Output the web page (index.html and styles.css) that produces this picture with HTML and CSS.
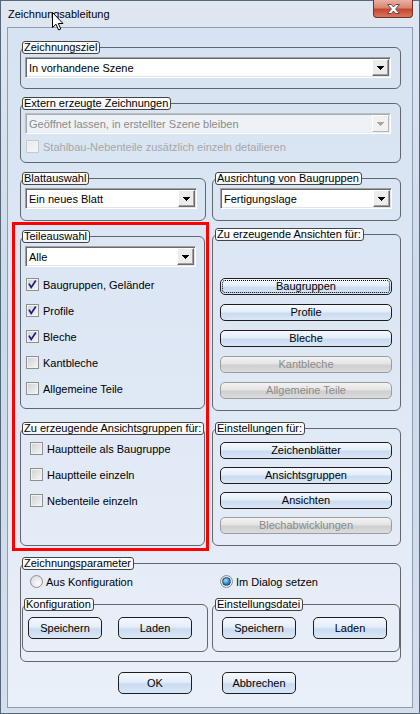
FILE: index.html
```html
<!DOCTYPE html>
<html lang="de">
<head>
  <meta charset="UTF-8">
  <title>Zeichnungsableitung</title>
  <link rel="stylesheet" href="styles.css">
</head>
<body>
  <div class="window">
    <div class="titlebar">
      <span class="title">Zeichnungsableitung</span>
      <div class="close">
        <svg width="13" height="10" viewBox="0 0 13 10"><path d="M0.5 0.5H4.3L6.5 3L8.7 0.5H12.5L8.6 5L12.5 9.5H8.7L6.5 7L4.3 9.5H0.5L4.4 5Z" fill="#fff" stroke="#6a4b47"/></svg>
      </div>
    </div>

    <div class="client">
      <fieldset class="group g-ziel">
        <legend>Zeichnungsziel</legend>
        <div class="combo"><span class="value">In vorhandene Szene</span><span class="drop"><svg width="7" height="4" viewBox="0 0 7 4"><path d="M0 0h7v1h-1v1h-1v1h-1v1h-1v-1h-1v-1h-1v-1h-1z"/></svg></span></div>
      </fieldset>

      <fieldset class="group g-extern">
        <legend>Extern erzeugte Zeichnungen</legend>
        <div class="combo disabled"><span class="value">Geöffnet lassen, in erstellter Szene bleiben</span><span class="drop"><svg width="7" height="4" viewBox="0 0 7 4"><path d="M0 0h7v1h-1v1h-1v1h-1v1h-1v-1h-1v-1h-1v-1h-1z"/></svg></span></div>
        <div class="check disabled"><span class="box"></span>Stahlbau-Nebenteile zusätzlich einzeln detailieren</div>
      </fieldset>

      <div class="row-top">
        <fieldset class="group">
          <legend>Blattauswahl</legend>
          <div class="combo"><span class="value">Ein neues Blatt</span><span class="drop"><svg width="7" height="4" viewBox="0 0 7 4"><path d="M0 0h7v1h-1v1h-1v1h-1v1h-1v-1h-1v-1h-1v-1h-1z"/></svg></span></div>
        </fieldset>
        <fieldset class="group right">
          <legend>Ausrichtung von Baugruppen</legend>
          <div class="combo"><span class="value">Fertigungslage</span><span class="drop"><svg width="7" height="4" viewBox="0 0 7 4"><path d="M0 0h7v1h-1v1h-1v1h-1v1h-1v-1h-1v-1h-1v-1h-1z"/></svg></span></div>
        </fieldset>
      </div>

      <div class="row-mid">
        <div class="highlight">
          <fieldset class="group teile">
            <legend>Teileauswahl</legend>
            <div class="combo"><span class="value">Alle</span><span class="drop"><svg width="7" height="4" viewBox="0 0 7 4"><path d="M0 0h7v1h-1v1h-1v1h-1v1h-1v-1h-1v-1h-1v-1h-1z"/></svg></span></div>
            <div class="checks">
              <div class="check"><span class="box"><svg width="11" height="11" viewBox="0 0 11 11"><path d="M2 4.6L4.2 8.4L8.8 1.6" fill="none" stroke="#1a1a8a" stroke-width="1.7"/></svg></span>Baugruppen, Geländer</div>
              <div class="check"><span class="box"><svg width="11" height="11" viewBox="0 0 11 11"><path d="M2 4.6L4.2 8.4L8.8 1.6" fill="none" stroke="#1a1a8a" stroke-width="1.7"/></svg></span>Profile</div>
              <div class="check"><span class="box"><svg width="11" height="11" viewBox="0 0 11 11"><path d="M2 4.6L4.2 8.4L8.8 1.6" fill="none" stroke="#1a1a8a" stroke-width="1.7"/></svg></span>Bleche</div>
              <div class="check"><span class="box"></span>Kantbleche</div>
              <div class="check"><span class="box"></span>Allgemeine Teile</div>
            </div>
          </fieldset>

          <fieldset class="group gruppen">
            <legend>Zu erzeugende Ansichtsgruppen für:</legend>
            <div class="checks">
              <div class="check"><span class="box"></span>Hauptteile als Baugruppe</div>
              <div class="check"><span class="box"></span>Hauptteile einzeln</div>
              <div class="check"><span class="box"></span>Nebenteile einzeln</div>
            </div>
          </fieldset>
        </div>

        <div class="col-right">
          <fieldset class="group right ansichten">
            <legend>Zu erzeugende Ansichten für:</legend>
            <div class="buttons">
              <button class="btn focus">Baugruppen</button>
              <button class="btn">Profile</button>
              <button class="btn">Bleche</button>
              <button class="btn" disabled>Kantbleche</button>
              <button class="btn" disabled>Allgemeine Teile</button>
            </div>
          </fieldset>

          <fieldset class="group right einstellungen">
            <legend>Einstellungen für:</legend>
            <div class="buttons">
              <button class="btn">Zeichenblätter</button>
              <button class="btn">Ansichtsgruppen</button>
              <button class="btn">Ansichten</button>
              <button class="btn" disabled>Blechabwicklungen</button>
            </div>
          </fieldset>
        </div>
      </div>

      <fieldset class="group g-param">
        <legend>Zeichnungsparameter</legend>
        <div class="radios">
          <div class="radio"><span class="dot"></span>Aus Konfiguration</div>
          <div class="radio"><span class="dot on"></span>Im Dialog setzen</div>
        </div>
        <div class="subgroups">
          <fieldset class="group sub konfig">
            <legend>Konfiguration</legend>
            <div class="btn-row">
              <button class="btn big">Speichern</button>
              <button class="btn big">Laden</button>
            </div>
          </fieldset>
          <fieldset class="group right sub datei">
            <legend>Einstellungsdatei</legend>
            <div class="btn-row">
              <button class="btn big">Speichern</button>
              <button class="btn big">Laden</button>
            </div>
          </fieldset>
        </div>
      </fieldset>

      <div class="dialog-buttons">
        <button class="btn big">OK</button>
        <button class="btn big">Abbrechen</button>
      </div>
    </div>

    <svg class="cursor" width="13" height="19" viewBox="0 0 13 19"><path d="M0.5 0.5V15.5L4 12.2L6.6 18L8.8 17L6.3 11.5H11Z" fill="#fff" stroke="#000"/></svg>
  </div>
</body>
</html>
```

FILE: styles.css
```css
* {
  box-sizing: border-box;
}
body {
  margin: 0;
  font-family: "Liberation Sans", Arial, sans-serif;
  font-size: 11px;
  color: #000;
  background: #fff;
}

/* fenster */
.window {
  position: relative;
  width: 420px;
  height: 714px;
  display: flex;
  flex-direction: column;
  padding: 0 6px 5px;
  border: 1px solid #56667b;
  background: linear-gradient(to bottom, #dfe7f1, #cdd9e8 45%, #d5dfec);
}
.titlebar {
  height: 26px;
  display: flex;
  justify-content: space-between;
  align-items: flex-start;
  padding-left: 1px;
}
.title {
  padding-top: 7px;
  line-height: 13px;
}
.close {
  width: 40px;
  height: 18px;
  margin-top: -1px;
  display: flex;
  align-items: center;
  justify-content: center;
  border: 1px solid #6d3128;
  border-top: none;
  border-radius: 0 0 4px 4px;
  background: linear-gradient(#eab1a5, #d98572 45%, #c4472f 55%, #d8765c);
}
.cursor {
  position: absolute;
  left: 51px;
  top: 11px;
}

.client {
  flex: 1;
  display: flex;
  flex-direction: column;
  padding: 0 11px 0 12px;
  border: 1px solid #8e9db2;
  background: linear-gradient(to bottom, #d7e3f2, #dfe8f5 55%, #eaf0f9);
}

/* gruppen */
.group {
  margin: 0;
  padding: 0;
  min-width: 0;
  border: 1px solid #62676e;
  border-radius: 6px;
}
.group > legend {
  margin-left: 1px;
  padding: 0 2px 0 1px;
  height: 13px;
  line-height: 11px;
  border: 1px solid #444;
  border-radius: 3px;
  background: linear-gradient(#fff, #f1f5fa);
  white-space: nowrap;
}
.group.right > legend {
  margin-left: 2px;
}

/* combobox */
.combo {
  display: flex;
  align-items: center;
  height: 21px;
  padding: 1px;
  border: 1px solid;
  border-color: #a0a0a0 #fff #fff #a0a0a0;
  box-shadow: inset 1px 1px 0 #696969, inset -1px -1px 0 #e3e3e3;
  background: #fff;
}
.combo .value {
  flex: 1;
  padding-left: 2px;
  white-space: nowrap;
  overflow: hidden;
}
.combo .drop {
  width: 17px;
  height: 17px;
  display: flex;
  align-items: center;
  justify-content: center;
  border: 1px solid;
  border-color: #fff #6b6b6b #6b6b6b #fff;
  box-shadow: inset -1px -1px 0 #a0a0a0;
  background: #ececec;
}
.combo .drop svg {
  fill: #000;
}
.combo.disabled {
  background: #eef2f7;
  color: #8a8a8a;
  border-color: #b9bfc7 #fff #fff #b9bfc7;
  box-shadow: inset 1px 1px 0 #a9adb3, inset -1px -1px 0 #e8ecf1;
}
.combo.disabled .drop {
  background: #f1f1f1;
  border-color: #fff #b5b5b5 #b5b5b5 #fff;
  box-shadow: none;
}
.combo.disabled .drop svg {
  fill: #a6a6a6;
}

/* checkboxen */
.check {
  display: flex;
  align-items: center;
  gap: 4px;
  height: 13px;
  white-space: nowrap;
}
.check .box {
  width: 13px;
  height: 13px;
  flex: none;
  border: 1px solid #8e8f8f;
  background: linear-gradient(135deg, #cfd0d2, #f6f6f6);
  box-shadow: inset 0 0 0 1px #f2f2f2;
}
.check .box svg {
  display: block;
}
.check.disabled {
  color: #a7a7a7;
}
.check.disabled .box {
  border-color: #c6c9cd;
  background: linear-gradient(135deg, #e6e8eb, #f7f8f9);
}
.checks {
  display: flex;
  flex-direction: column;
  gap: 13px;
}

/* radio */
.radios {
  display: grid;
  grid-template-columns: 190px auto;
  margin: 5px 0 0 9px;
}
.radio {
  display: flex;
  align-items: center;
  gap: 3px;
  height: 13px;
}
.radio .dot {
  width: 13px;
  height: 13px;
  display: flex;
  align-items: center;
  justify-content: center;
  border: 1px solid #8e8f8f;
  border-radius: 50%;
  background: radial-gradient(circle at 65% 70%, #fbfbfb, #d4d5d7);
}
.radio .dot.on::after {
  content: "";
  width: 7px;
  height: 7px;
  border-radius: 50%;
  border: 1px solid #1d4f80;
  background: radial-gradient(circle at 40% 35%, #a6e0fa, #2a86c8 55%, #0c4f8c);
}

/* buttons */
.btn {
  font: inherit;
  color: #000;
  height: 17px;
  padding: 0;
  line-height: 15px;
  border: 1px solid #1d1d1d;
  border-radius: 5px;
  background: linear-gradient(#f4f8fe 0%, #e4edf9 45%, #cadcf1 55%, #d9e6f6 100%);
}
.btn.focus {
  outline: 1px dotted #000;
  outline-offset: -3px;
}
.btn:disabled {
  color: #8b8b8b;
  border-color: #9c9c9c;
  background: linear-gradient(#f3f3f3 0%, #e4e4e4 45%, #cfcfcf 55%, #dcdcdc 100%);
}
.btn.big {
  width: 74px;
  height: 22px;
  line-height: 20px;
}
.buttons {
  display: flex;
  flex-direction: column;
  gap: 9px;
  margin: 0 8px 0 7px;
}

/* abstaende */
.g-ziel {
  margin-top: 13px;
  padding-bottom: 10px;
}
.g-ziel .combo,
.g-extern .combo {
  margin: 3px 9px 0 4px;
}
.g-extern {
  margin-top: 8px;
  padding-bottom: 9px;
}
.g-extern .check {
  margin: 6px 0 0 5px;
}

.row-top {
  display: grid;
  grid-template-columns: 186px 189px;
  gap: 6px;
  margin-top: 9px;
}
.row-top .group {
  padding-bottom: 11px;
}
.row-top .combo {
  margin: 3px 8px 0 4px;
}
.row-top .right .combo {
  margin-left: 7px;
}

.row-mid {
  display: flex;
  align-items: flex-start;
  gap: 3px;
  margin-top: 1px;
}
.highlight {
  width: 197px;
  flex: none;
  margin-left: -8px;
  padding: 5px 1px 2px 5px;
  border: 3px solid #ff0000;
}
.teile {
  padding-bottom: 13px;
}
.teile .combo {
  margin: 3px 8px 0 4px;
}
.teile .checks {
  margin: 11px 0 0 5px;
}
.gruppen {
  margin-top: 13px;
  padding-bottom: 38px;
}
.gruppen .checks {
  margin: 7px 0 0 9px;
}

.col-right {
  width: 189px;
  flex: none;
  margin-top: 6px;
  display: flex;
  flex-direction: column;
}
.ansichten {
  padding-bottom: 11px;
}
.ansichten .buttons {
  margin-top: 37px;
}
.einstellungen {
  margin-top: 11px;
  padding-bottom: 11px;
}
.einstellungen .buttons {
  margin-top: 7px;
  gap: 8px;
}

.g-param {
  margin-top: 6px;
  padding-bottom: 9px;
}
.subgroups {
  display: grid;
  grid-template-columns: 186px 188px;
  gap: 4px;
  margin: 10px 0 0 1px;
}
.sub {
  padding-bottom: 12px;
}
.btn-row {
  display: flex;
  margin-top: 6px;
}
.konfig .btn-row {
  gap: 16px;
  padding-left: 5px;
}
.datei .btn-row {
  gap: 17px;
  padding-left: 9px;
}

.dialog-buttons {
  display: flex;
  gap: 30px;
  margin-top: 10px;
  padding-left: 98px;
}
```
